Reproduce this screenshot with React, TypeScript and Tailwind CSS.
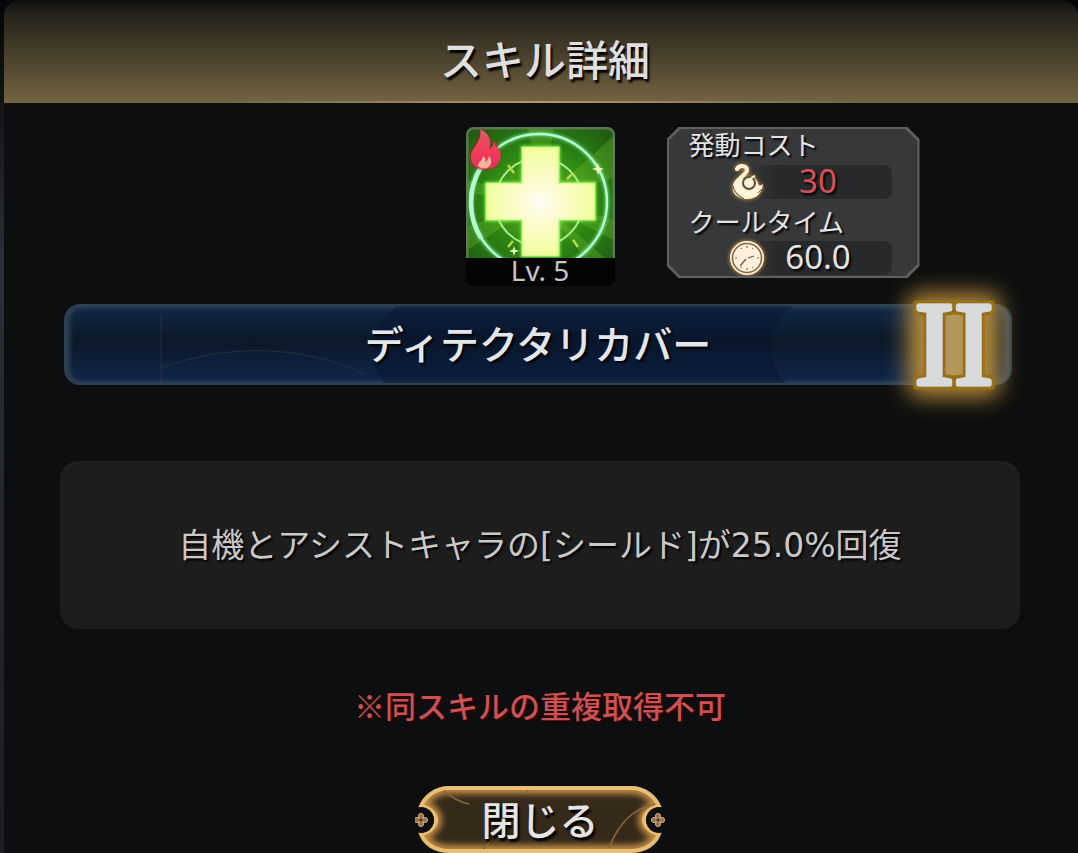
import React from "react";

const FONT = "font-['Noto_Sans_CJK_JP','Noto_Sans',sans-serif]";

function SkillArt() {
  return (
    <svg viewBox="0 0 149 131" className="block w-full rounded-t-lg" aria-hidden="true">
      <defs>
        <radialGradient id="field" cx="50%" cy="55%" r="70%">
          <stop offset="0" stopColor="#6fbf2a" />
          <stop offset="0.55" stopColor="#2c8412" />
          <stop offset="1" stopColor="#1f5a12" />
        </radialGradient>
        <radialGradient id="cross" gradientUnits="userSpaceOnUse" cx="74" cy="75" r="56">
          <stop offset="0" stopColor="#fffdf4" />
          <stop offset="0.5" stopColor="#fbfbc4" />
          <stop offset="1" stopColor="#efff9c" />
        </radialGradient>
        <linearGradient id="flame" x1="0" y1="0" x2="0" y2="1">
          <stop offset="0" stopColor="#d9606a" />
          <stop offset="0.5" stopColor="#f43d5c" />
          <stop offset="1" stopColor="#e8305a" />
        </linearGradient>
        <filter id="soft" x="-20%" y="-20%" width="140%" height="140%">
          <feGaussianBlur stdDeviation="1.6" />
        </filter>
      </defs>
      <rect width="149" height="132" fill="url(#field)" />
      <g fill="#8fd63a" opacity="0.22">
        <path d="M74 75 149 8v42z" />
        <path d="M74 75 149 92v22z" />
        <path d="M74 75 0 100v24z" />
        <path d="M74 75 62 0h26z" />
        <path d="M74 75 0 52v14z" />
        <path d="M74 75 120 132h20z" />
      </g>
      <g fill="none">
        <circle cx="73" cy="75" r="68" stroke="#6cf09a" strokeWidth="5" opacity="0.6" filter="url(#soft)" />
        <circle cx="73" cy="75" r="68" stroke="#b9ffd0" strokeWidth="2.4" />
        <path d="M15 111A68 68 0 0 1 15 40" stroke="#b4ffd2" strokeWidth="4.5" />
        <circle cx="73" cy="75" r="44" stroke="#a5f08c" strokeWidth="2" />
      </g>
      <g stroke="#b6d84c" strokeWidth="2.5">
        <path d="m42 38 6 8M107 46l-6 6M42 120l5-6M112 120l-5-7" />
      </g>
      <path
        d="M56 20H93V56H129V93H93V129H56V93H20V56H56Z"
        fill="#b2ff58"
        stroke="#8dff58"
        strokeWidth="3"
        opacity="0.7"
        filter="url(#soft)"
      />
      <path d="M56 20H93V56H129V93H93V129H56V93H20V56H56Z" fill="url(#cross)" stroke="#b3f76a" strokeWidth="1.2" />
      <g fill="#eaffc0">
        <path d="m132 36 1.500 4.500 4.500 1.500-4.500 1.500-1.500 4.500-1.500-4.500-4.500-1.500 4.500-1.500z" />
        <path d="m48 119 1.200 3.800 3.800 1.200-3.800 1.200-1.200 3.800-1.200-3.800-3.800-1.200 3.800-1.200z" />
      </g>
      <rect x="1" y="1" width="147" height="140" rx="7" fill="none" stroke="#6e7d66" strokeWidth="3" opacity="0.75" />
      <path
        d="M14 2C23 6 26 14 24 21C27 20 28 16 28 13C34 20 35 27 33 33C31 40 25 43 18 43C10 43 4 38 4 30C4 20 16 14 14 2Z"
        fill="#c3122f"
        opacity="0.75"
        filter="url(#soft)"
      />
      <path
        d="M14 2C23 6 26 14 23 22C27 21 28 17 28 13C29 18 31 20 31 24C34 24 34 21 33 20C36 27 35 33 31 38C28 41 23 42 18 42C10 42 4 37 5 29C6 20 17 14 14 2Z"
        fill="url(#flame)"
      />
      <path d="M12 39C12 34 17 34 17 29C20 31 20 33 19 35C22 34 22 31 23 29C27 34 25 39 21 41C18 42 14 41 12 39Z" fill="#f7b39c" />
    </svg>
  );
}

function SnakeIcon() {
  return (
    <svg viewBox="0 0 36 36" className="size-9 shrink-0 drop-shadow-[0_0_2px_#e8a13c]" aria-hidden="true">
      <path d="M8 5C10 1 18 1 18 6C18 10 10 13 8 19" fill="none" stroke="#fff3da" strokeWidth="4" strokeLinecap="round" />
      <path
        d="M9 14C1 19 1 34 17 35C28 35 33 29 34 20C32 22 30 22 29 20C29 14 20 10 15 15Z"
        fill="#fff3da"
      />
      <circle cx="20" cy="19" r="6" fill="#fff3da" stroke="#5f4c33" strokeWidth="2" />
      <path d="M20 18C21 15 23 13 26 12" stroke="#fff3da" strokeWidth="2" fill="none" />
      <path d="M4 22C5 28 9 32 15 35" fill="none" stroke="#6b5436" strokeWidth="1.200" />
      <path d="M29 29l4-4" stroke="#6b5436" strokeWidth="1" />
    </svg>
  );
}

function ClockIcon() {
  return (
    <svg viewBox="0 0 36 36" className="size-9 shrink-0 drop-shadow-[0_0_2px_#e8a13c]" aria-hidden="true">
      <circle cx="18" cy="18" r="17" fill="#fff0d4" />
      <circle cx="18" cy="18" r="14.500" fill="#fdf1dc" stroke="#83684a" strokeWidth="1.600" />
      <path
        d="M18 6v2M18 28v2M6 18h2M28 18h2M12 8l.5 1M24 8l-.5 1M12 28l.5-1M24 28l-.5-1"
        stroke="#8a7050"
        strokeWidth="1.200"
      />
      <path d="M11 26 17 19M19 18 25 16" fill="none" stroke="#6e5638" strokeWidth="1.200" />
    </svg>
  );
}

function RankEmblem() {
  return (
    <svg
      viewBox="0 0 140 140"
      role="img"
      aria-label="II"
      className="pointer-events-none absolute -right-[14px] top-1/2 size-[140px] -translate-y-1/2 overflow-visible"
    >
      <defs>
        <filter id="halo" x="-60%" y="-60%" width="220%" height="220%">
          <feGaussianBlur stdDeviation="11" />
        </filter>
        <filter id="rim" x="-20%" y="-20%" width="140%" height="140%">
          <feMorphology in="SourceAlpha" operator="dilate" radius="3" result="fat" />
          <feFlood floodColor="#987016" />
          <feComposite in2="fat" operator="in" result="gold" />
          <feMerge>
            <feMergeNode in="gold" />
            <feMergeNode in="SourceGraphic" />
          </feMerge>
        </filter>
      </defs>
      <rect x="24" y="18" width="92" height="104" rx="10" fill="#b58a3a" filter="url(#halo)" />
      <rect x="58" y="32" width="24" height="74" fill="#b3965a" />
      <text
        x="70"
        y="109"
        textAnchor="middle"
        fontSize="118"
        fill="#d9dadc"
        stroke="#d9dadc"
        strokeWidth="5"
        strokeLinejoin="round"
        filter="url(#rim)"
        className="font-['Liberation_Serif',serif]"
      >
        II
      </text>
      <path d="M70 27v11M70 102v11" stroke="#987016" strokeWidth="3" />
    </svg>
  );
}

function CostSlot({ icon, value, tone }: { icon: React.ReactNode; value: string; tone: string }) {
  return (
    <div className="ml-[60px] mr-[26px] flex h-[34px] items-center rounded-r-lg bg-linear-to-r from-transparent from-10% to-[#28292b] to-30%">
      {icon}
      <span
        className={`flex-1 pb-[2px] pr-5 text-center font-['Noto_Sans',sans-serif] text-[33px] leading-[28px] [text-shadow:2px_2px_2px_#000] ${tone}`}
      >
        {value}
      </span>
    </div>
  );
}

const CHAMFER =
  "[clip-path:polygon(12px_0,calc(100%-12px)_0,100%_12px,100%_calc(100%-12px),calc(100%-12px)_100%,12px_100%,0_calc(100%-12px),0_12px)]";

function CostPanel() {
  return (
    <div className={`w-[253px] bg-[#5d5f61] p-[2px] ${CHAMFER}`}>
      <div className={`bg-[#37383a] pb-px ${CHAMFER}`}>
        <p className="pb-[6px] pl-5 text-[26px] leading-[30px] text-[#e4e4e5] [text-shadow:2px_2px_2px_#000]">
          発動コスト
        </p>
        <CostSlot icon={<SnakeIcon />} value="30" tone="text-[#da4f54]" />
        <p className="pb-[2px] pl-5 pt-1 text-[26px] leading-[36px] text-[#e4e4e5] [text-shadow:2px_2px_2px_#000]">
          クールタイム
        </p>
        <CostSlot icon={<ClockIcon />} value="60.0" tone="text-[#e4e4e4]" />
      </div>
    </div>
  );
}

function CloseFrame() {
  const outline =
    "M30 2H212C226 2 236 11 240 20C220 25 220 43 240 48C236 58 226 65 212 65H30C16 65 6 58 2 48C22 43 22 25 2 20C6 11 16 2 30 2Z";
  return (
    <svg viewBox="-4 0 250 67" className="absolute inset-0 size-full" aria-hidden="true">
      <defs>
        <filter id="glow" x="-10%" y="-20%" width="120%" height="140%">
          <feGaussianBlur stdDeviation="3" />
        </filter>
        <clipPath id="plate">
          <path d={outline} />
        </clipPath>
        <g id="flower">
          <circle cy="-4" r="2.600" />
          <circle cy="4" r="2.600" />
          <circle cx="-4" r="2.600" />
          <circle cx="4" r="2.600" />
          <path d="M-3-3 3 3M3-3-3 3" />
          <circle r="1.800" fill="#4b3722" stroke="none" />
        </g>
      </defs>
      <path d={outline} fill="#35291a" />
      <g clipPath="url(#plate)">
        <path d={outline} fill="none" stroke="#c18b45" strokeWidth="12" filter="url(#glow)" />
        <path
          d="M24 4C34 12 40 16 50 18M190 62C200 36 215 22 236 18M62 66l10-12M112 0l-6 8"
          fill="none"
          stroke="#8a6738"
          strokeWidth="1.500"
        />
      </g>
      <path d={outline} fill="none" stroke="#e9bd74" strokeWidth="4" />
      <g fill="#0d0e0f">
        <circle cx="2" cy="34" r="13" />
        <circle cx="240" cy="34" r="13" />
      </g>
      <g fill="#9a7450" stroke="#cda67a" strokeWidth="1">
        <use href="#flower" x="2" y="34" />
        <use href="#flower" x="239" y="34" />
      </g>
    </svg>
  );
}

export default function App() {
  return (
    <div className={`min-h-screen overflow-hidden bg-linear-to-b from-[#050607] via-[#2b3036] via-30% to-[#1b1e22] pl-1 ${FONT}`}>
      <section aria-labelledby="dialog-title" className="min-h-screen rounded-t-2xl bg-[#0d0e0f]">
        <header className="relative flex h-[103px] items-center justify-center rounded-t-2xl bg-linear-to-b from-[#0c1012] via-[#27231b] via-14% to-[#746542] pl-2 pt-3">
          <h1
            id="dialog-title"
            className="text-[42px] font-medium leading-[60px] text-[#dfdfdf] [text-shadow:2px_3px_2px_#000]"
          >
            スキル詳細
          </h1>
          <div className="absolute inset-x-[20%] bottom-0 h-[2px] bg-linear-to-r from-transparent via-[#b09a6c] to-transparent" />
        </header>

        <main className="flex flex-col pl-14 pr-[58px] pt-6">
          <div className="grid grid-cols-[1fr_149px_1fr] items-start">
            <figure className="col-start-2">
              <SkillArt />
              <figcaption className="rounded-b-lg bg-[#030404] pb-1 text-center font-['Noto_Sans',sans-serif] text-[28px] leading-[24px] text-[#c6c6c6]">
                Lv. 5
              </figcaption>
            </figure>
            <div className="pl-[52px]">
              <CostPanel />
            </div>
          </div>

          <div className="relative ml-1 mr-2 mt-[18px] flex h-[81px] items-center justify-center rounded-2xl border-2 border-[#2c4055] bg-[#0b1a30] bg-linear-to-b from-[#12294a] via-[#0b1827] via-45% to-[#10264d] pb-[6px] shadow-[inset_4px_0_4px_#2f4350,inset_-6px_0_6px_#46515c]">
            <svg viewBox="0 0 944 77" preserveAspectRatio="none" className="absolute inset-0 size-full" aria-hidden="true">
              <path d="M330 0C302 24 302 54 318 77H720C696 50 700 20 728 0Z" fill="#071331" opacity="0.45" />
              <path d="M95 62C160 38 235 38 298 68M95 10V76" fill="none" stroke="#3c3a48" strokeWidth="1" opacity="0.6" />
            </svg>
            <h2 className="relative text-[39px] font-medium leading-[56px] text-[#e4e7ea] [text-shadow:2px_2px_2px_#000]">
              ディテクタリカバー
            </h2>
            <RankEmblem />
          </div>

          <div className="mt-[76px] flex min-h-[168px] items-center justify-center rounded-[18px] bg-[#1d1d1d] px-6 pt-[2px]">
            <p className="text-center font-['DejaVu_Sans','Noto_Sans_CJK_JP',sans-serif] text-[33px] leading-[48px] text-[#cbc8c5] [text-shadow:2px_2px_2px_#000]">
              自機とアシストキャラの[シールド]が25.0%回復
            </p>
          </div>

          <p className="mt-[52px] text-center text-[31px] font-medium leading-[48px] text-[#c85254] [text-shadow:2px_2px_2px_#300]">
            ※同スキルの重複取得不可
          </p>

          <button
            type="button"
            className="relative mt-[57px] flex h-[67px] w-[250px] cursor-pointer items-center justify-center self-center pb-1"
          >
            <CloseFrame />
            <span className="relative text-[39px] font-medium leading-[56px] text-[#e6e5e3] [text-shadow:2px_3px_2px_#000]">
              閉じる
            </span>
          </button>
        </main>
      </section>
    </div>
  );
}
